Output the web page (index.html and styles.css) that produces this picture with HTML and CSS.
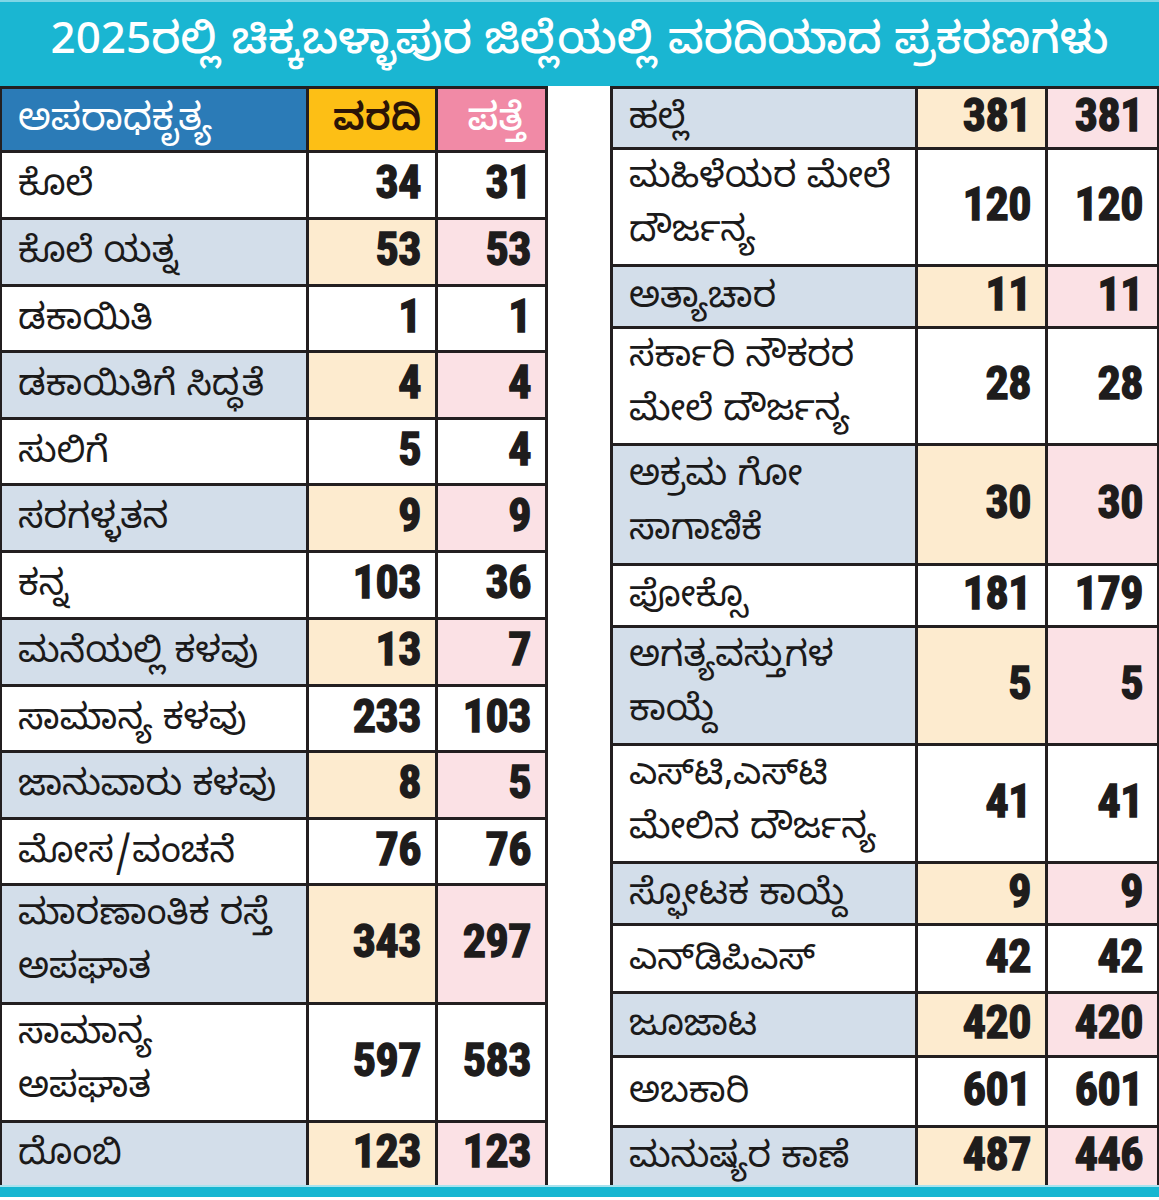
FILE: index.html
```html
<!DOCTYPE html>
<html lang="kn">
<head>
<meta charset="utf-8">
<title>2025ರಲ್ಲಿ ಚಿಕ್ಕಬಳ್ಳಾಪುರ ಜಿಲ್ಲೆಯಲ್ಲಿ ವರದಿಯಾದ ಪ್ರಕರಣಗಳು</title>
<link rel="stylesheet" href="styles.css">
</head>
<body>
<div class="page">
  <header class="title">2025ರಲ್ಲಿ ಚಿಕ್ಕಬಳ್ಳಾಪುರ ಜಿಲ್ಲೆಯಲ್ಲಿ ವರದಿಯಾದ ಪ್ರಕರಣಗಳು</header>
  <main class="tables">
    <div class="tbl tbl-left">
      <div class="cell hd hd-l">ಅಪರಾಧಕೃತ್ಯ</div>
      <div class="cell hd hd-v">ವರದಿ</div>
      <div class="cell hd hd-p">ಪತ್ತೆ</div>

      <div class="cell lbl">ಕೊಲೆ</div><div class="cell num">34</div><div class="cell num">31</div>
      <div class="cell lbl s">ಕೊಲೆ ಯತ್ನ</div><div class="cell num sv">53</div><div class="cell num sp">53</div>
      <div class="cell lbl">ಡಕಾಯಿತಿ</div><div class="cell num">1</div><div class="cell num">1</div>
      <div class="cell lbl s">ಡಕಾಯಿತಿಗೆ ಸಿದ್ಧತೆ</div><div class="cell num sv">4</div><div class="cell num sp">4</div>
      <div class="cell lbl">ಸುಲಿಗೆ</div><div class="cell num">5</div><div class="cell num">4</div>
      <div class="cell lbl s">ಸರಗಳ್ಳತನ</div><div class="cell num sv">9</div><div class="cell num sp">9</div>
      <div class="cell lbl">ಕನ್ನ</div><div class="cell num">103</div><div class="cell num">36</div>
      <div class="cell lbl s">ಮನೆಯಲ್ಲಿ ಕಳವು</div><div class="cell num sv">13</div><div class="cell num sp">7</div>
      <div class="cell lbl">ಸಾಮಾನ್ಯ ಕಳವು</div><div class="cell num">233</div><div class="cell num">103</div>
      <div class="cell lbl s">ಜಾನುವಾರು ಕಳವು</div><div class="cell num sv">8</div><div class="cell num sp">5</div>
      <div class="cell lbl">ಮೋಸ/ವಂಚನೆ</div><div class="cell num">76</div><div class="cell num">76</div>
      <div class="cell lbl s two">ಮಾರಣಾಂತಿಕ ರಸ್ತೆ<br>ಅಪಘಾತ</div><div class="cell num sv">343</div><div class="cell num sp">297</div>
      <div class="cell lbl two">ಸಾಮಾನ್ಯ<br>ಅಪಘಾತ</div><div class="cell num">597</div><div class="cell num">583</div>
      <div class="cell lbl s">ದೊಂಬಿ</div><div class="cell num sv">123</div><div class="cell num sp">123</div>
    </div>

    <div class="tbl tbl-right">
      <div class="cell lbl s">ಹಲ್ಲೆ</div><div class="cell num sv">381</div><div class="cell num sp">381</div>
      <div class="cell lbl two">ಮಹಿಳೆಯರ ಮೇಲೆ<br>ದೌರ್ಜನ್ಯ</div><div class="cell num">120</div><div class="cell num">120</div>
      <div class="cell lbl s">ಅತ್ಯಾಚಾರ</div><div class="cell num sv">11</div><div class="cell num sp">11</div>
      <div class="cell lbl two">ಸರ್ಕಾರಿ ನೌಕರರ<br>ಮೇಲೆ ದೌರ್ಜನ್ಯ</div><div class="cell num">28</div><div class="cell num">28</div>
      <div class="cell lbl s two">ಅಕ್ರಮ ಗೋ<br>ಸಾಗಾಣಿಕೆ</div><div class="cell num sv">30</div><div class="cell num sp">30</div>
      <div class="cell lbl">ಪೋಕ್ಸೊ</div><div class="cell num">181</div><div class="cell num">179</div>
      <div class="cell lbl s two">ಅಗತ್ಯವಸ್ತುಗಳ<br>ಕಾಯ್ದೆ</div><div class="cell num sv">5</div><div class="cell num sp">5</div>
      <div class="cell lbl two">ಎಸ್‌ಟಿ,ಎಸ್‌ಟಿ<br>ಮೇಲಿನ ದೌರ್ಜನ್ಯ</div><div class="cell num">41</div><div class="cell num">41</div>
      <div class="cell lbl s">ಸ್ಫೋಟಕ ಕಾಯ್ದೆ</div><div class="cell num sv">9</div><div class="cell num sp">9</div>
      <div class="cell lbl">ಎನ್‌ಡಿಪಿಎಸ್</div><div class="cell num">42</div><div class="cell num">42</div>
      <div class="cell lbl s">ಜೂಜಾಟ</div><div class="cell num sv">420</div><div class="cell num sp">420</div>
      <div class="cell lbl">ಅಬಕಾರಿ</div><div class="cell num">601</div><div class="cell num">601</div>
      <div class="cell lbl s">ಮನುಷ್ಯರ ಕಾಣೆ</div><div class="cell num sv">487</div><div class="cell num sp">446</div>
    </div>
  </main>
  <footer class="bottom-bar"></footer>
</div>
</body>
</html>
```

FILE: styles.css
```css
* { box-sizing: border-box; }

html, body {
  margin: 0;
  padding: 0;
  background: #ffffff;
}

body {
  font-family: "Noto Sans Kannada", "Noto Serif Kannada", "Lohit Kannada", "Tunga", "Kedage", "Noto Sans", sans-serif;
  color: #1b1a1a;
}

.page {
  width: 1159px;
  display: flex;
  flex-direction: column;
}

.title {
  height: 86px;
  background: #1ab6d2;
  border-top: 2px solid #7fd6e6;
  color: #ffffff;
  font-size: 44px;
  font-weight: 500;
  display: flex;
  align-items: center;
  justify-content: center;
  white-space: nowrap;
  padding-top: 6px;
}

.tables {
  display: flex;
  gap: 62px;
  align-items: flex-start;
}

.tbl {
  display: grid;
  background: #231f20;
  column-gap: 3px;
  row-gap: 3px;
}

.tbl-left {
  width: 548px;
  padding: 3px 3px 0 2px;
  grid-template-columns: 304px 126px 107px;
  grid-template-rows: 61px 64px 64px 63px 64px 63px 64px 64px 64px 63px 64px 63px 116px 115px 62px;
}

.tbl-right {
  width: 549px;
  padding: 3px 2px 0 3px;
  grid-template-columns: 302px 127px 109px;
  grid-template-rows: 58px 114px 59px 114px 117px 59px 115px 115px 59px 65px 61px 67px 57px;
}

.cell {
  background: #ffffff;
  display: flex;
  align-items: center;
  overflow: hidden;
}

.lbl {
  font-size: 36px;
  line-height: 52px;
  padding-left: 16px;
  padding-top: 10px;
  white-space: nowrap;
}

.two {
  line-height: 54px;
  padding-top: 4px;
}

.num {
  justify-content: flex-end;
  padding-right: 14px;
  padding-bottom: 6px;
  font-family: "Liberation Sans Narrow", "Arial Narrow", "Roboto Condensed", "Liberation Sans", sans-serif;
  font-weight: 700;
  font-size: 46px;
  color: #1e1c1c;
  -webkit-text-stroke: 1.4px #1e1c1c;
  letter-spacing: -0.5px;
}

.s { background: #d3deea; }
.sv { background: #fdebcf; }
.sp { background: #fbe1e5; }

.hd {
  font-size: 38px;
  line-height: 50px;
  padding-top: 10px;
}

.hd-l {
  background: #2b7bb7;
  color: #ffffff;
  padding-left: 16px;
}

.hd-v {
  background: #fdbf15;
  color: #2b1406;
  font-weight: 600;
  justify-content: flex-end;
  padding-right: 14px;
}

.hd-p {
  background: #f18aa6;
  color: #ffffff;
  font-weight: 500;
  justify-content: flex-end;
  padding-right: 20px;
}

.bottom-bar {
  height: 12px;
  background: #17b6d1;
  border-top: 2px solid #a9e2ee;
}
```
